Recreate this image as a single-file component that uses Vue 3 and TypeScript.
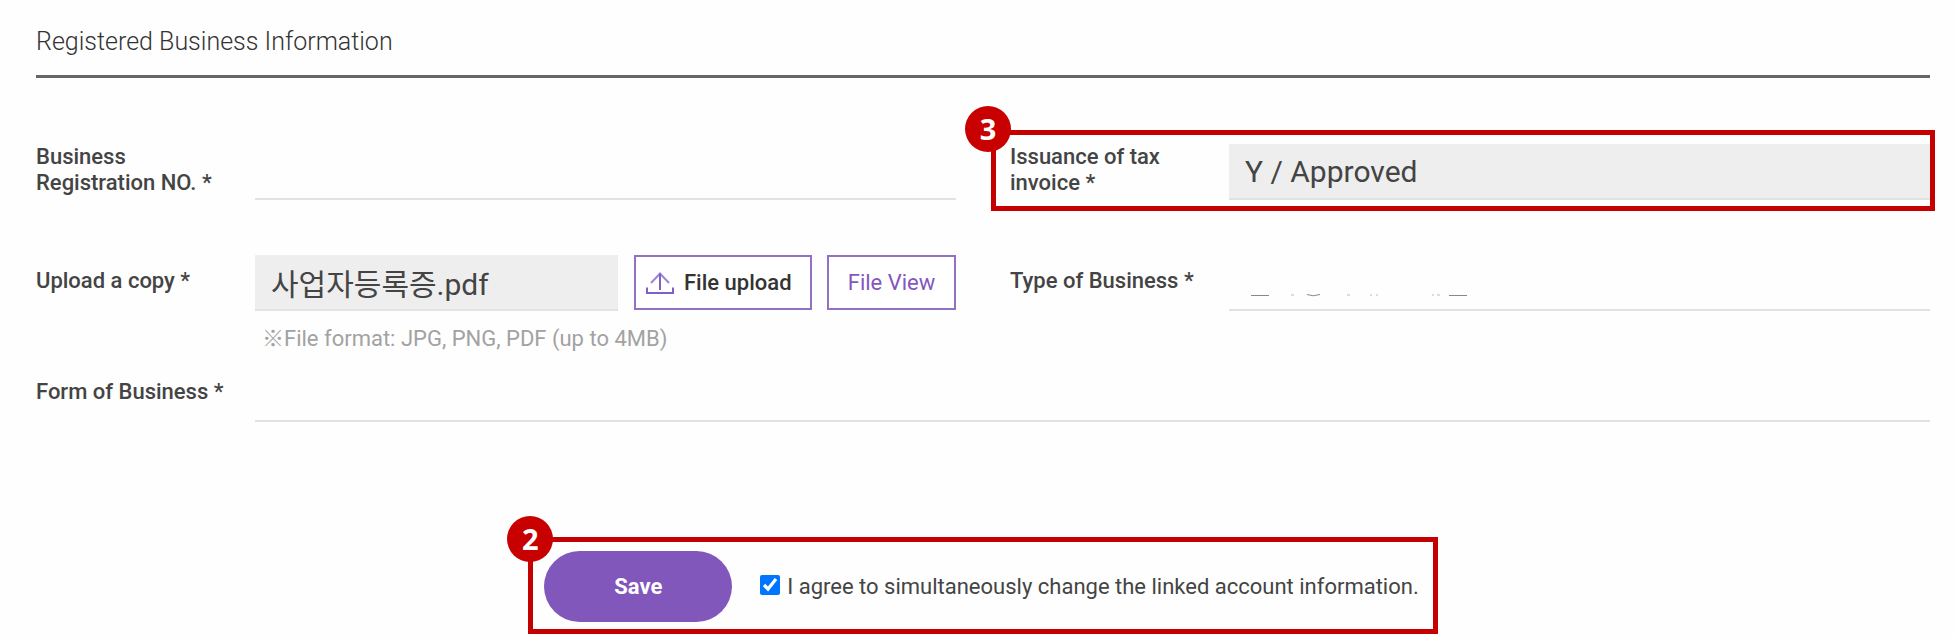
<script setup lang="ts">
import { ref } from 'vue'

const registrationNo = ref('')
const taxInvoice = ref('Y / Approved')
const fileName = ref('사업자등록증.pdf')
const businessType = ref('')
const businessForm = ref('')
const agreed = ref(true)
</script>

<template>
  <form class="page" @submit.prevent>
    <h1 class="title">Registered Business Information</h1>

    <div class="grid">
      <div class="field">
        <label class="label" for="reg-no">Business<br />Registration NO. *</label>
        <input id="reg-no" v-model="registrationNo" class="input" type="text" />
      </div>

      <div class="field marked">
        <label class="label" for="tax">Issuance of tax<br />invoice *</label>
        <input id="tax" v-model="taxInvoice" class="input filled" type="text" readonly />
        <div class="outline"><span class="badge">3</span></div>
      </div>

      <div class="field">
        <label class="label" for="file-name">Upload a copy *</label>
        <div class="upload">
          <input id="file-name" v-model="fileName" class="input filled" type="text" readonly />
          <button class="btn upload-btn" type="button">
            <svg class="upload-icon" viewBox="0 0 28 24" aria-hidden="true">
              <path class="arrow" d="M5 12 14 2.500 23 12" />
              <path d="M14 2.500V19M1 16.500V22H27V16.500" />
            </svg>
            File upload
          </button>
          <button class="btn view-btn" type="button">File View</button>
        </div>
      </div>

      <div class="field">
        <label class="label" for="type">Type of Business *</label>
        <div class="masked">
          <input id="type" v-model="businessType" class="input" type="text" />
          <svg class="traces" viewBox="0 0 220 4" aria-hidden="true">
            <path d="M1 2.500H19M57 1.500Q63 4 70 1.500M199 2.500H217" />
            <path class="faint" d="M41 2H44M97 2H100M120 2H122M126 2H128M182 2H184M187 2H190" />
          </svg>
        </div>
      </div>

      <p class="hint">※File format: JPG, PNG, PDF (up to 4MB)</p>

      <div class="field wide">
        <label class="label" for="form">Form of Business *</label>
        <input id="form" v-model="businessForm" class="input" type="text" />
      </div>
    </div>

    <div class="actions">
      <span class="badge">2</span>
      <button class="save" type="submit">Save</button>
      <label class="agree">
        <input v-model="agreed" class="check" type="checkbox" />
        I agree to simultaneously change the linked account information.
      </label>
    </div>
  </form>
</template>

<style>
body {
  margin: 0;
  background: #fefefe;
}
</style>

<style scoped>
.page {
  display: flex;
  flex-direction: column;
  padding: 24px 24px 6px 36px;
  color: #444;
  font-family: Roboto, "Noto Sans CJK KR", sans-serif;
  font-size: 22px;
  line-height: 26px;
}

.page *,
.page *::before {
  box-sizing: border-box;
}

.title {
  margin: 0;
  padding: 1px 0 16px;
  border-bottom: 3px solid #666;
  color: #333;
  font-size: 25px;
  font-weight: 300;
  line-height: 34px;
}

.grid {
  display: grid;
  grid-template-columns: 1fr 1fr;
  column-gap: 54px;
  margin-top: 66px;
}

.field {
  display: grid;
  grid-template-columns: 219px 1fr;
  align-items: center;
  margin-bottom: 55px;
}

.label {
  padding-bottom: 4px;
  font-weight: 500;
}

.input {
  width: 100%;
  min-width: 0;
  height: 56px;
  padding: 0 16px;
  border: 0;
  border-bottom: 2px solid #e2e2e2;
  border-radius: 0;
  background: transparent;
  color: #444;
  font: inherit;
  font-size: 30px;
  outline: 0;
}

.filled {
  background: #eee;
}

.marked {
  position: relative;
}

.outline {
  position: absolute;
  inset: -14px -5px -11px -19px;
  border: 5px solid #c50000;
  pointer-events: none;
}

.badge {
  position: absolute;
  top: -29px;
  left: -31px;
  display: grid;
  place-items: center;
  width: 46px;
  height: 46px;
  border-radius: 50%;
  background: #c90000;
  color: #fff;
  font-family: "Noto Sans", sans-serif;
  font-size: 29px;
  font-weight: 700;
}

.upload {
  display: flex;
  align-items: flex-start;
}

.upload .input {
  flex: 1;
}

.btn {
  flex: none;
  height: 55px;
  padding: 0;
  border: 2px solid #9270c6;
  background: #fff;
  font: inherit;
}

.upload-btn {
  display: flex;
  align-items: center;
  gap: 10px;
  width: 178px;
  margin: 0 15px 0 16px;
  padding-left: 10px;
  color: #333;
  font-weight: 500;
}

.view-btn {
  width: 129px;
  color: #8457bd;
}

.upload-icon {
  width: 28px;
  height: 24px;
  fill: none;
  stroke: #8060c8;
  stroke-width: 2;
}

.upload-icon .arrow {
  stroke: #a184d3;
}

.masked {
  position: relative;
}

.traces {
  position: absolute;
  bottom: 14px;
  left: 21px;
  width: 220px;
  height: 4px;
  fill: none;
  stroke: #888;
  stroke-width: 1;
}

.traces .faint {
  stroke: #bbb;
}

.hint {
  grid-column: 1 / -1;
  margin: -40px 0 1px 226px;
  color: #a2a2a2;
}

.wide {
  grid-column: 1 / -1;
  margin: 0;
}

.actions {
  position: relative;
  display: flex;
  align-items: center;
  align-self: center;
  margin-top: 115px;
  padding: 9px 14px 7px 11px;
  border: 5px solid #c50000;
}

.actions .badge {
  top: -26px;
  left: -26px;
}

.save {
  width: 188px;
  height: 71px;
  padding: 0;
  border: 0;
  border-radius: 36px;
  background: #8257bc;
  color: #fff;
  font: inherit;
  font-weight: 700;
}

.agree {
  display: flex;
  align-items: center;
  margin-left: 28px;
  gap: 7px;
}

.check {
  width: 20px;
  height: 20px;
  margin: 0 0 4px;
  accent-color: #0075ff;
}
</style>
